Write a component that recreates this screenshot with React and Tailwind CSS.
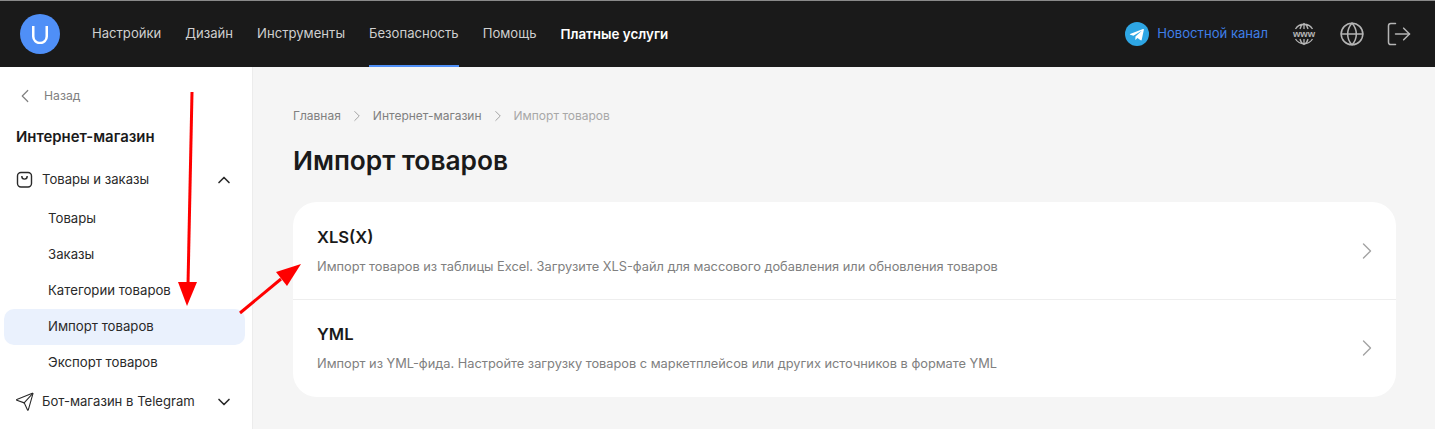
import { ChevronLeft, ChevronRight, ChevronUp, ChevronDown, Globe, LogOut, Send } from "lucide-react";

const navItems = ["Настройки", "Дизайн", "Инструменты", "Безопасность", "Помощь"];
const subItems = ["Товары", "Заказы", "Категории товаров", "Импорт товаров", "Экспорт товаров"];
const importRows = [
  {
    title: "XLS(X)",
    text: "Импорт товаров из таблицы Excel. Загрузите XLS-файл для массового добавления или обновления товаров",
  },
  {
    title: "YML",
    text: "Импорт из YML-фида. Настройте загрузку товаров с маркетплейсов или других источников в формате YML",
  },
];

function Header() {
  return (
    <header className="flex h-[67px] items-center justify-between border-t border-[#8a8a8a] bg-[#1a1a1a] pl-5 pr-[22px]">
      <div className="flex h-full items-center">
        <div className="flex h-10 w-10 items-center justify-center rounded-full bg-[#4f8ff7]">
          <svg className="h-5 w-5" viewBox="0 0 20 20" fill="none" stroke="white" strokeWidth="2.500">
            <path d="M3.250 2v10.500a6.750 6.500 0 0 0 13.500 0V2" />
          </svg>
        </div>
        <nav className="ml-8 flex h-full items-center gap-6 text-[13.100px] text-[#cfcfcf]">
          {navItems.map((item) => (
            <a
              key={item}
              className={`flex h-full items-center border-b-2 pt-0.5 ${
                item === "Безопасность" ? "border-[#4f8ff7]" : "border-transparent"
              }`}
            >
              {item}
            </a>
          ))}
          <a className="text-[13.400px] font-semibold text-white">Платные услуги</a>
        </nav>
      </div>
      <div className="flex items-center">
        <div className="flex h-6 w-6 items-center justify-center rounded-full bg-[#2ea6e4]">
          <svg className="h-4 w-4" viewBox="0 0 24 24" fill="white">
            <path d="M2.500 11.600 21 4.500c.8-.3 1.500.2 1.200 1.400l-3.100 14.700c-.2 1-.8 1.300-1.700.8l-4.700-3.500-2.300 2.200c-.3.3-.5.5-1 .5l.3-4.800 8.700-7.900c.4-.3-.1-.5-.6-.2L6.600 14.500l-4.600-1.400c-1-.3-1-1 .5-1.500z" />
          </svg>
        </div>
        <span className="ml-2 text-[13.100px] text-[#3f7fe8]">Новостной канал</span>
        <svg className="ml-6 h-6 w-6" viewBox="0 0 24 24" fill="none" stroke="#b5b5b5" strokeWidth="1.300">
          <path d="M3.500 7a10 10 0 0 1 17 0M3.500 17a10 10 0 0 0 17 0M12 1.500V7M12 17v5.500M8 7c.6-2.700 2-4.500 4-5.500 2 1 3.400 2.800 4 5.500M8 17c.6 2.700 2 4.500 4 5.500 2-1 3.400-2.800 4-5.500" />
          <text x="12" y="14.800" textAnchor="middle" fontSize="9.500" fontWeight="700" fill="#b5b5b5" stroke="none" fontFamily="'Liberation Sans', sans-serif">
            www
          </text>
        </svg>
        <Globe className="ml-[23px] h-[26px] w-[26px] text-[#b5b5b5]" strokeWidth={1.400} />
        <LogOut className="ml-5 h-7 w-7 text-[#b5b5b5]" strokeWidth={1.300} />
      </div>
    </header>
  );
}

function Sidebar() {
  return (
    <aside className="w-[253px] shrink-0 border-r border-[#ececec] bg-white pt-[18px] text-[#2a2a2a]">
      <div className="flex h-[22px] items-center pl-[14px] text-[12.200px] text-[#808080]">
        <ChevronLeft className="h-[22px] w-[22px]" strokeWidth={1.300} />
        <span className="ml-2">Назад</span>
      </div>
      <div className="mt-[20px] h-[20px] pl-4 text-[14.900px] font-semibold leading-5 text-[#1a1a1a]">Интернет-магазин</div>
      <div className="mt-[21px] flex h-6 items-center pl-4 pr-[18px] text-[13.100px]">
        <svg className="h-[18px] w-[18px]" viewBox="0 0 18 18" fill="none" stroke="#2a2a2a" strokeWidth="1.400">
          <rect x="1.500" y="1.500" width="14" height="14.500" rx="3.500" />
          <path d="M5.800 5c0 4.200 5.400 4.200 5.400 0" />
        </svg>
        <span className="ml-2">Товары и заказы</span>
        <ChevronUp className="ml-auto h-5 w-5" strokeWidth={2} />
      </div>
      <ul className="mt-[9px] pl-1 pr-[7px] text-[13.200px]">
        {subItems.map((item) => (
          <li
            key={item}
            className={`flex h-9 items-center rounded-[10px] pl-11 ${item === "Импорт товаров" ? "bg-[#eaf1fd]" : ""}`}
          >
            {item}
          </li>
        ))}
      </ul>
      <div className="mt-[9px] flex h-6 items-center pl-[15px] pr-[18px] text-[13.100px]">
        <Send className="h-5 w-5 -rotate-[3deg]" strokeWidth={1.300} />
        <span className="ml-[7px]">Бот-магазин в Telegram</span>
        <ChevronDown className="ml-auto h-5 w-5" strokeWidth={2} />
      </div>
    </aside>
  );
}

function Arrows() {
  return (
    <svg className="pointer-events-none absolute left-0 top-0 h-[429px] w-[1435px]" viewBox="0 0 1435 429">
      <path d="M192 92 188 285" stroke="#ff0000" strokeWidth="3" fill="none" />
      <path d="M178 282h19l-10 24z" fill="#ff0000" />
      <path d="M240 313 281 279" stroke="#ff0000" strokeWidth="3" fill="none" />
      <path d="M301 264 276 272 287 286z" fill="#ff0000" />
    </svg>
  );
}

export default function App() {
  return (
    <div className="relative flex h-[429px] w-[1435px] flex-col overflow-hidden bg-white font-['Inter',sans-serif]">
      <Header />
      <div className="flex min-h-0 flex-1">
        <Sidebar />
        <main className="flex-1 bg-[#f5f5f5] pl-10 pr-[39px] pt-[39px]">
          <div className="flex h-5 items-center text-xs text-[#808080]">
            <span>Главная</span>
            <ChevronRight className="mx-[7px] h-[18px] w-[18px] text-[#9a9a9a]" strokeWidth={1.200} />
            <span>Интернет-магазин</span>
            <ChevronRight className="mx-[7px] h-[18px] w-[18px] text-[#9a9a9a]" strokeWidth={1.200} />
            <span className="text-[#a8a8a8]">Импорт товаров</span>
          </div>
          <h1 className="mt-[17px] h-9 text-[26.300px] font-semibold leading-9 text-[#1a1a1a]">Импорт товаров</h1>
          <div className="mt-[23px] rounded-3xl bg-white">
            {importRows.map((row, i) => (
              <div
                key={row.title}
                className={`flex items-center justify-between pl-6 pr-[15px] ${
                  i === 0 ? "h-[98px] border-b border-[#eeeeee] pt-px" : "h-[97px] pb-px"
                }`}
              >
                <div>
                  <div className="text-[16.600px] font-semibold leading-6 text-[#1a1a1a]">{row.title}</div>
                  <div className="mt-2 text-[12.800px] leading-5 text-[#808080]">{row.text}</div>
                </div>
                <ChevronRight className="h-7 w-7 text-[#a3a3a3]" strokeWidth={1.200} />
              </div>
            ))}
          </div>
        </main>
      </div>
      <Arrows />
    </div>
  );
}
